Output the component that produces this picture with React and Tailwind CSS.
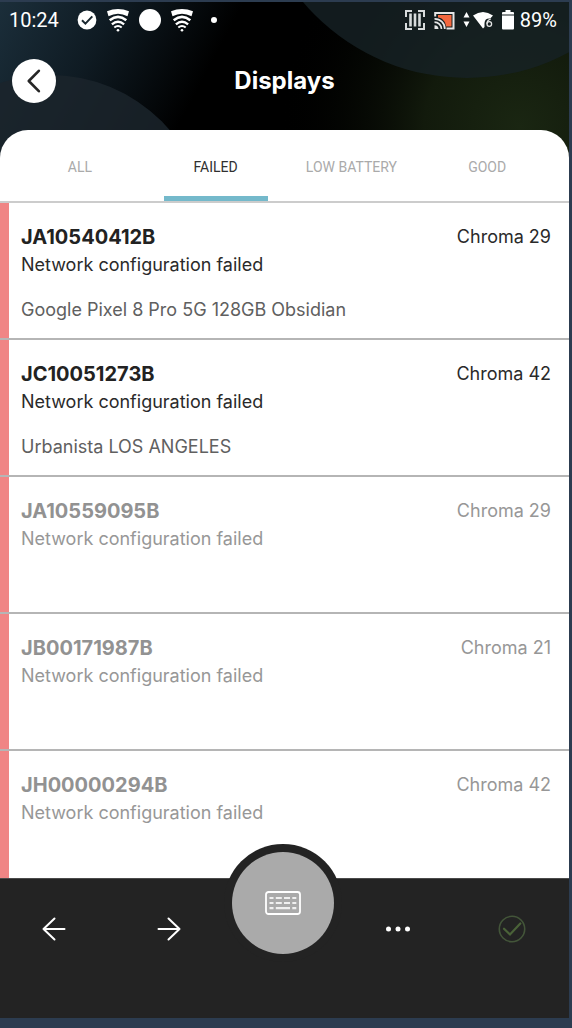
const rows = [
  { id: "JA10540412B", type: "Chroma 29", product: "Google Pixel 8 Pro 5G 128GB Obsidian", active: true },
  { id: "JC10051273B", type: "Chroma 42", product: "Urbanista LOS ANGELES", active: true },
  { id: "JA10559095B", type: "Chroma 29", product: "", active: false },
  { id: "JB00171987B", type: "Chroma 21", product: "", active: false },
  { id: "JH00000294B", type: "Chroma 42", product: "", active: false },
];

const tabs = ["ALL", "FAILED", "LOW BATTERY", "GOOD"];

function Backdrop() {
  return (
    <svg className="absolute inset-x-0 top-0 h-40 w-full" viewBox="0 0 569 160" preserveAspectRatio="none" aria-hidden="true">
      <defs>
        <linearGradient id="blue" x1="0" y1="0" x2="1" y2="0.15">
          <stop offset="0" stopColor="#1b2e3a" />
          <stop offset="0.2" stopColor="#0f1b23" />
          <stop offset="0.42" stopColor="#000000" />
        </linearGradient>
        <radialGradient id="green" gradientUnits="userSpaceOnUse" cx="520" cy="125" r="240">
          <stop offset="0" stopColor="#1a2612" />
          <stop offset="0.4" stopColor="#121a0c" />
          <stop offset="1" stopColor="#000000" stopOpacity="0" />
        </radialGradient>
      </defs>
      <rect width="569" height="160" fill="url(#blue)" />
      <rect width="569" height="160" fill="url(#green)" />
      <circle cx="50" cy="231" r="158" fill="#1b242c" fillOpacity="0.85" />
      <circle cx="467" cy="-139" r="215" fill="#172226" fillOpacity="0.8" />
    </svg>
  );
}

function CheckBadge() {
  return (
    <svg width="20" height="20" viewBox="0 0 20 20">
      <circle cx="10" cy="10" r="9.4" fill="#fff" />
      <path d="M5 10.3l3.4 3.3L15.3 6.4" fill="none" stroke="#1a2830" strokeWidth="2" />
    </svg>
  );
}

function WifiArcs() {
  return (
    <svg width="24" height="24" viewBox="0 0 24 24" fill="none" stroke="#fff">
      <path d="M1 3.200Q12-1.400 23 3.200L21.500 8.300Q12 3.200 2.500 8.300z" fill="#fff" stroke="none" />
      <path d="M3.700 12.300Q12 5.600 20.300 12.300" strokeWidth="2.600" />
      <path d="M5.900 16.400Q12 11 18.100 16.400" strokeWidth="2.300" />
      <path d="M8.300 19.600Q12 16.400 15.700 19.600" strokeWidth="2" />
      <circle cx="12" cy="22.200" r="1.300" fill="#fff" stroke="none" />
    </svg>
  );
}

function BarcodeIcon() {
  return (
    <svg width="22" height="22" viewBox="0 0 22 22" fill="none" stroke="#d8dcdd" strokeWidth="2">
      <path d="M8 2H2v6M14 2h6v6M8 20H2v-6M14 20h6v-6" />
      <path d="M6.500 4.500v13M11 4.500v13M15.500 4.500v13" strokeWidth="2.600" />
    </svg>
  );
}

function CastIcon() {
  return (
    <svg width="21" height="19" viewBox="0 0 21 19">
      <path d="M4 4h13.500v11.500H12C11.500 10 8 7 4 6.500z" fill="#f4683f" />
      <g fill="none" stroke="#e6e6e6" strokeWidth="2">
        <path d="M1.200 5.500V2h18.300v15.500H12.500" />
        <path d="M.500 7.800A10 10 0 0 1 10.800 18" strokeWidth="1.700" />
        <path d="M.500 11.200A7 7 0 0 1 7.500 18" strokeWidth="1.700" />
      </g>
      <path d="M.500 14.200A4 4 0 0 1 4.500 18H.500z" fill="#e6e6e6" />
    </svg>
  );
}

function WifiSix() {
  return (
    <svg width="31" height="18" viewBox="0 0 31 18" fill="#fff">
      <path d="M3.500 1l3 5.500h-6zM3.500 16l3-5.500h-6z" />
      <path d="M10 4.500Q20-2.500 30 4.500L27.300 7.600Q22 7 21.500 12V16L20 17.500z" />
      <path d="M27.700 8.200Q24.200 9 23.900 12.700" fill="none" stroke="#e6e6e6" strokeWidth="1.300" />
      <circle cx="26.300" cy="13" r="2.300" fill="none" stroke="#e6e6e6" strokeWidth="1.300" />
    </svg>
  );
}

function BatteryIcon() {
  return (
    <svg width="12" height="20" viewBox="0 0 12 20" fill="#fff">
      <path d="M3.500 0h5v2H11a1 1 0 0 1 1 1v1.500H0V3a1 1 0 0 1 1-1h2.500z" />
      <path d="M0 5.500h12V18.500a1 1 0 0 1-1 1H1a1 1 0 0 1-1-1z" />
    </svg>
  );
}

function KeyboardIcon() {
  return (
    <svg width="36" height="24" viewBox="0 0 36 24" fill="none" stroke="#fff">
      <rect x="1" y="1" width="34" height="22" rx="2.500" strokeWidth="1.800" />
      <path strokeWidth="2.200" stroke="#f0f0f0" d="M4.500 7h4M10.800 7h6M19 7h6M27.300 7h4M4.500 12h4M10.800 12h6M19 12h6M27.300 12h4M4.500 17.200h4M10.800 17.200h14.200M27.300 17.200h4" />
    </svg>
  );
}

function Row({ row }) {
  return (
    <li className="flex h-[137px] shrink-0 border-b-2 border-[#b5b5b5]">
      <span className="w-[9px] shrink-0 bg-[#f08585]" />
      <div className={"flex flex-1 justify-between pt-5 pr-[18px] pl-3 text-lg leading-7 " + (row.active ? "text-[#2a2a2a]" : "text-[#979797]")}>
        <div>
          <h2 className={"text-xl leading-7 font-bold " + (row.active ? "text-[#222222]" : "text-[#929292]")}>{row.id}</h2>
          <p>Network configuration failed</p>
          {row.product && <p className="mt-[17px] text-[#606060]">{row.product}</p>}
        </div>
        <p>{row.type}</p>
      </div>
    </li>
  );
}

export default function App() {
  return (
    <div className="h-screen bg-[#2c3c50] pt-0.5 pr-[3px] pb-2.5 font-['Inter',sans-serif]">
      <div className="relative flex h-full flex-col overflow-hidden bg-black">
        <Backdrop />
        <div className="relative flex h-9 shrink-0 items-center justify-between pr-3 pl-[9px] font-['Roboto',sans-serif] text-xl text-white">
          <div className="flex items-center">
            <span>10:24</span>
            <div className="ml-[18px] flex items-center gap-[9px]">
              <CheckBadge />
              <WifiArcs />
              <span className="size-[22px] rounded-full bg-white" />
              <WifiArcs />
            </div>
            <span className="ml-[17px] size-1.5 rounded-full bg-white" />
          </div>
          <div className="flex items-center gap-2">
            <BarcodeIcon />
            <CastIcon />
            <WifiSix />
            <div className="flex items-center gap-1.5">
              <BatteryIcon />
              <span>89%</span>
            </div>
          </div>
        </div>
        <header className="relative grid h-[92px] shrink-0 grid-cols-[44px_1fr_44px] items-center px-3 pb-1.5">
          <button aria-label="Back" className="flex size-11 items-center justify-center rounded-full bg-white">
            <svg width="14" height="24" viewBox="0 0 14 24" fill="none" stroke="#262626" strokeWidth="2.600" strokeLinecap="round" strokeLinejoin="round">
              <path d="M11.800 1.800L1.800 12l10 10.200" />
            </svg>
          </button>
          <h1 className="text-center text-2xl font-bold text-white">Displays</h1>
        </header>
        <main className="relative flex min-h-0 flex-1 flex-col overflow-hidden rounded-t-[28px] bg-white">
          <nav className="flex h-[73px] shrink-0 border-b-2 border-[#cccccc] pr-3.5 pl-3 font-['Roboto',sans-serif] text-sm">
            {tabs.map((tab) => (
              <button key={tab} className={"flex flex-1 flex-col px-4 whitespace-nowrap " + (tab === "FAILED" ? "text-[#303030]" : "text-[#aaaaaa]")}>
                <span className="flex w-full flex-1 items-center justify-center pt-2">{tab}</span>
                <span className={"h-[5px] w-full " + (tab === "FAILED" ? "bg-[#74b9cb]" : "")} />
              </button>
            ))}
          </nav>
          <ul className="flex min-h-0 flex-1 flex-col overflow-y-auto [scrollbar-width:none]">
            {rows.map((row) => (
              <Row key={row.id} row={row} />
            ))}
          </ul>
        </main>
        <footer className="relative flex h-[140px] shrink-0 justify-between border-t border-[#4a4a4a] bg-[#232323] pt-9 pr-[43px] pl-10 text-white">
          <button aria-label="Previous" className="flex size-7 items-center justify-center">
            <svg width="24" height="24" viewBox="0 0 24 24" fill="none" stroke="#fff" strokeWidth="2" strokeLinecap="round" strokeLinejoin="round">
              <path d="M22.500 12H1.500M12.500 1.500L1.500 12l11 10.500" />
            </svg>
          </button>
          <button aria-label="Next" className="flex size-7 items-center justify-center">
            <svg width="24" height="24" viewBox="0 0 24 24" fill="none" stroke="#fff" strokeWidth="2" strokeLinecap="round" strokeLinejoin="round">
              <path d="M1.500 12h21M11.500 1.500l11 10.500-11 10.500" />
            </svg>
          </button>
          <div className="relative size-7">
            <button aria-label="Keyboard" className="absolute bottom-[-11px] left-1/2 flex size-[102px] -translate-x-1/2 items-center justify-center rounded-full bg-[#aaaaaa] ring-8 ring-[#232323]">
              <KeyboardIcon />
            </button>
          </div>
          <button aria-label="More" className="flex size-7 items-center justify-center">
            <svg width="26" height="8" viewBox="0 0 26 8" fill="#fff" className="shrink-0">
              <circle cx="3.500" cy="4" r="2.500" />
              <circle cx="13" cy="4" r="2.500" />
              <circle cx="22.500" cy="4" r="2.500" />
            </svg>
          </button>
          <button aria-label="Confirm" className="flex size-7 items-center justify-center">
            <svg width="28" height="28" viewBox="0 0 28 28" fill="none" stroke="#435539" strokeLinecap="round">
              <circle cx="14" cy="14" r="12.700" strokeWidth="1.600" />
              <path d="M6 13.700l6 5.800L22.300 8.500" strokeWidth="2.200" stroke="#4a6238" />
            </svg>
          </button>
        </footer>
      </div>
    </div>
  );
}
